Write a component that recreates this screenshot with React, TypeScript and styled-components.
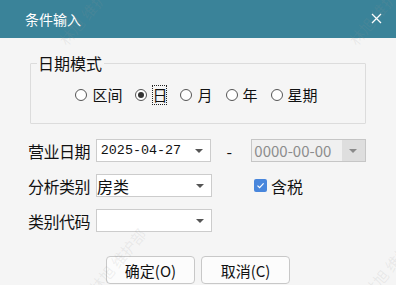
import styled, { createGlobalStyle } from "styled-components";

const GlobalStyle = createGlobalStyle`
  html, body {
    margin: 0;
    padding: 0;
    background: #f5f5f5;
  }
  * {
    box-sizing: border-box;
  }
`;

const Dialog = styled.div`
  position: relative;
  width: 396px;
  height: 285px;
  overflow: hidden;
  background: #f5f5f5;
  font-family: "Noto Sans CJK SC", "Noto Sans", sans-serif;
  color: #111;
`;

const TitleBar = styled.div`
  height: 38px;
  display: flex;
  align-items: center;
  justify-content: space-between;
  padding: 0 14px 0 25px;
  background: #3a8399;
  color: #fff;
  font-size: 14px;
`;

const CloseButton = styled.span`
  display: flex;
  align-items: center;
  justify-content: center;
  width: 12px;
  height: 12px;
  margin-top: -1px;
`;

const Body = styled.div`
  padding: 16px 30px 0 28px;
`;

const Group = styled.fieldset`
  margin: 0 0 0 2px;
  width: 336px;
  height: 70px;
  padding: 13px 0 0;
  border: 1px solid #dcdcdc;
  border-radius: 1px;
`;

const Legend = styled.legend`
  margin-left: 6px;
  padding: 0 2px 0 1px;
  font-size: 16px;
  line-height: 18px;
`;

const RadioRow = styled.div`
  display: flex;
  justify-content: center;
  gap: 13px;
  padding-right: 3px;
  font-size: 15px;
  line-height: 20px;
`;

const RadioOption = styled.label`
  display: flex;
  align-items: center;
  gap: 5px;
`;

const RadioCircle = styled.span<{ checked: boolean }>`
  position: relative;
  width: 12px;
  height: 12px;
  border-radius: 50%;
  border: 1px solid #555;
  background: #fff;
  &::after {
    content: "";
    display: ${({ checked }) => (checked ? "block" : "none")};
    position: absolute;
    left: 2px;
    top: 2px;
    width: 6px;
    height: 6px;
    border-radius: 50%;
    background: #333;
  }
`;

const RadioText = styled.span<{ focused: boolean }>`
  outline: ${({ focused }) => (focused ? "1px dotted #222" : "none")};
  outline-offset: -1px;
`;

const Form = styled.div`
  display: flex;
  flex-direction: column;
  gap: 12px;
  margin-top: 15px;
`;

const Row = styled.div`
  display: flex;
  align-items: center;
  height: 23px;
`;

const Label = styled.span`
  width: 68px;
  font-size: 16px;
  letter-spacing: -0.5px;
`;

const Select = styled.div<{ disabled?: boolean }>`
  display: flex;
  align-items: center;
  width: ${({ disabled }) => (disabled ? "115px" : "116px")};
  height: 23px;
  border: 1px solid ${({ disabled }) => (disabled ? "#c6c6c6" : "#cccccc")};
  background: ${({ disabled }) => (disabled ? "#f0f0f0" : "#fff")};
`;

const Value = styled.span<{ mono?: boolean; muted?: boolean }>`
  flex: 1;
  padding-left: ${({ mono, muted }) => (mono ? "4px" : muted ? "2px" : "0")};
  font-family: ${({ mono }) =>
    mono ? '"Liberation Mono", monospace' : '"Noto Sans CJK SC", "Noto Sans", sans-serif'};
  font-size: ${({ mono, muted }) => (mono ? "13.4px" : muted ? "15px" : "16px")};
  color: ${({ muted }) => (muted ? "#8c8c8c" : "#111")};
  white-space: nowrap;
  overflow: hidden;
`;

const ArrowBox = styled.span<{ disabled?: boolean }>`
  display: flex;
  align-items: center;
  justify-content: center;
  width: 23px;
  height: 100%;
  background: ${({ disabled }) => (disabled ? "#dedede" : "transparent")};
  &::after {
    content: "";
    border-left: 4px solid transparent;
    border-right: 4px solid transparent;
    border-top: 4px solid ${({ disabled }) => (disabled ? "#8a8a8a" : "#555")};
  }
`;

const Dash = styled.span`
  width: 40px;
  padding-left: 15px;
  font-size: 16px;
`;

const Check = styled.label`
  display: flex;
  align-items: center;
  gap: 4px;
  margin-left: 42px;
  font-size: 16px;
`;

const CheckBox = styled.span`
  display: flex;
  align-items: center;
  justify-content: center;
  width: 13px;
  height: 13px;
  border-radius: 2px;
  background: #4886dc;
`;

const Buttons = styled.div`
  display: flex;
  justify-content: center;
  gap: 6px;
  margin: 24px 0 0 -28px;
  width: 396px;
`;

const Button = styled.button`
  width: 89px;
  height: 28px;
  border: 1px solid #c8c8c8;
  border-radius: 4px;
  background: #fcfcfc;
  font-family: "Noto Sans CJK SC", "Noto Sans", sans-serif;
  font-size: 15px;
  color: #111;
  padding: 0;
`;

const Watermark = styled.span<{ x: number; y: number }>`
  position: absolute;
  left: ${({ x }) => x}px;
  top: ${({ y }) => y}px;
  transform: rotate(-50deg);
  font-size: 15px;
  line-height: 17px;
  color: rgba(150, 150, 150, 0.14);
  white-space: nowrap;
  pointer-events: none;
`;

const radios = ["区间", "日", "月", "年", "星期"];

const App = () => {
  return (
    <Dialog>
      <GlobalStyle />
      <TitleBar>
        <span>条件输入</span>
        <CloseButton>
          <svg width="11" height="11" viewBox="0 0 11 11">
            <path d="M1 1L10 10M10 1L1 10" stroke="#fff" strokeWidth="1.3" />
          </svg>
        </CloseButton>
      </TitleBar>
      <Body>
        <Group>
          <Legend>日期模式</Legend>
          <RadioRow>
            {radios.map((r) => (
              <RadioOption key={r}>
                <RadioCircle checked={r === "日"} />
                <RadioText focused={r === "日"}>{r}</RadioText>
              </RadioOption>
            ))}
          </RadioRow>
        </Group>
        <Form>
          <Row>
            <Label>营业日期</Label>
            <Select>
              <Value mono>2025-04-27</Value>
              <ArrowBox />
            </Select>
            <Dash>-</Dash>
            <Select disabled>
              <Value muted>0000-00-00</Value>
              <ArrowBox disabled />
            </Select>
          </Row>
          <Row>
            <Label>分析类别</Label>
            <Select>
              <Value>房类</Value>
              <ArrowBox />
            </Select>
            <Check>
              <CheckBox>
                <svg width="9" height="9" viewBox="0 0 9 9">
                  <path d="M1.5 4.6L3.6 6.6L7.6 2.4" stroke="#fff" strokeWidth="1.2" fill="none" />
                </svg>
              </CheckBox>
              含税
            </Check>
          </Row>
          <Row>
            <Label>类别代码</Label>
            <Select>
              <Value />
              <ArrowBox />
            </Select>
          </Row>
        </Form>
        <Buttons>
          <Button>确定(O)</Button>
          <Button>取消(C)</Button>
        </Buttons>
      </Body>
      <Watermark x={48} y={4}>林旭 维护部</Watermark>
      <Watermark x={338} y={4}>林旭 维护部</Watermark>
      <Watermark x={78} y={252}>林旭 维护部</Watermark>
      <Watermark x={352} y={256}>林旭 维护部</Watermark>
    </Dialog>
  );
};

export default App;
